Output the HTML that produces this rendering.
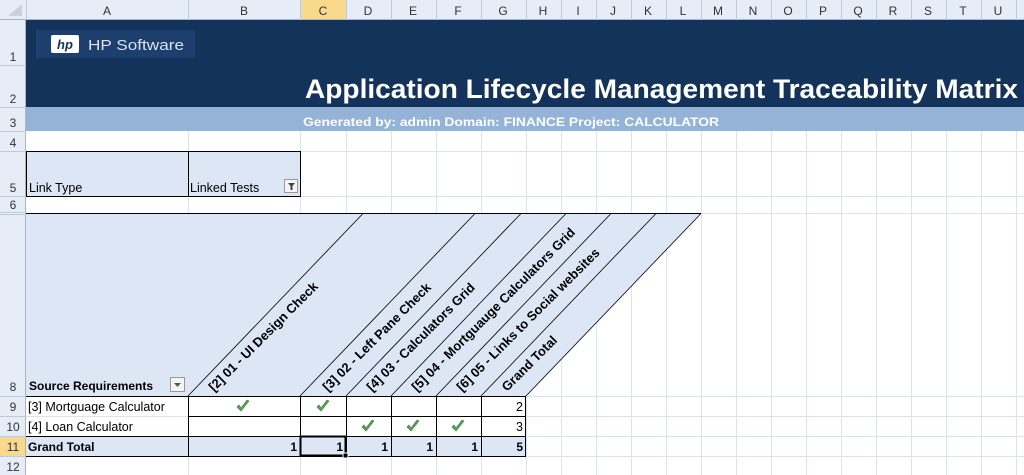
<!DOCTYPE html>
<html><head><meta charset="utf-8"><style>
html,body{margin:0;padding:0;background:#fff;overflow:hidden}
svg{display:block}
text{font-family:"Liberation Sans",sans-serif}
</style></head><body>
<svg width="1024" height="475" viewBox="0 0 1024 475" xmlns="http://www.w3.org/2000/svg">
<defs>
<g id="chk"><path d="M-6,1 L-2,5 L6,-5 L4,-6 L-2,2 L-4,-1 Z" fill="#5aa05a" stroke="#3d7d3d" stroke-width="0.6"/></g>
</defs>
<rect width="1024" height="475" fill="#fff"/>
<g stroke="#dde3ec" stroke-width="1">
<line x1="188.5" y1="20" x2="188.5" y2="475"/><line x1="300.5" y1="20" x2="300.5" y2="475"/>
<line x1="346.5" y1="20" x2="346.5" y2="475"/><line x1="391.5" y1="20" x2="391.5" y2="475"/>
<line x1="436.5" y1="20" x2="436.5" y2="475"/><line x1="481.5" y1="20" x2="481.5" y2="475"/>
<line x1="526.5" y1="20" x2="526.5" y2="475"/><line x1="561.5" y1="20" x2="561.5" y2="475"/>
<line x1="596.5" y1="20" x2="596.5" y2="475"/><line x1="631.5" y1="20" x2="631.5" y2="475"/>
<line x1="666.5" y1="20" x2="666.5" y2="475"/><line x1="701.5" y1="20" x2="701.5" y2="475"/>
<line x1="736.5" y1="20" x2="736.5" y2="475"/><line x1="771.5" y1="20" x2="771.5" y2="475"/>
<line x1="806.5" y1="20" x2="806.5" y2="475"/><line x1="841.5" y1="20" x2="841.5" y2="475"/>
<line x1="876.5" y1="20" x2="876.5" y2="475"/><line x1="911.5" y1="20" x2="911.5" y2="475"/>
<line x1="946.5" y1="20" x2="946.5" y2="475"/><line x1="981.5" y1="20" x2="981.5" y2="475"/>
<line x1="1016.5" y1="20" x2="1016.5" y2="475"/>
<line x1="26" y1="151.5" x2="1024" y2="151.5"/><line x1="26" y1="196.5" x2="1024" y2="196.5"/>
<line x1="26" y1="213.5" x2="1024" y2="213.5"/><line x1="26" y1="396.5" x2="1024" y2="396.5"/>
<line x1="26" y1="416.5" x2="1024" y2="416.5"/><line x1="26" y1="436.5" x2="1024" y2="436.5"/>
<line x1="26" y1="456.5" x2="1024" y2="456.5"/>
</g>
<rect x="26" y="20" width="998" height="87" fill="#13335a"/>
<rect x="26" y="107" width="998" height="24" fill="#94b3d7"/>
<rect x="36" y="30" width="159" height="28" fill="#1c3f6d"/>
<rect x="51" y="35" width="28" height="18" rx="2" fill="#fff"/>
<text x="65" y="49" font-size="13" font-weight="bold" font-style="italic" fill="#13335a" text-anchor="middle">hp</text>
<text x="88" y="50" font-size="15" fill="#dbe3ee" textLength="96" lengthAdjust="spacingAndGlyphs">HP Software</text>
<text x="305" y="98" font-size="27" font-weight="bold" fill="#fff" textLength="713" lengthAdjust="spacingAndGlyphs">Application Lifecycle Management Traceability Matrix</text>
<text x="303" y="126" font-size="12" font-weight="bold" fill="#fff" textLength="416" lengthAdjust="spacingAndGlyphs">Generated by: admin Domain: FINANCE Project: CALCULATOR</text>
<rect x="26.5" y="151.5" width="274" height="45" fill="#dce6f5" stroke="#000"/>
<line x1="188.5" y1="151.5" x2="188.5" y2="196.5" stroke="#000"/>
<text x="29" y="192" font-size="12.5" fill="#000">Link Type</text>
<text x="190" y="192" font-size="12.5" fill="#000">Linked Tests</text>
<rect x="284.5" y="179.5" width="13" height="13" fill="#f4f4f4" stroke="#999"/>
<path d="M288,183 h7 l-2.5,3 v4 h-2 v-4 z" fill="#444"/>
<polygon points="26,213.5 701,213.5 526,396 26,396" fill="#dce6f5"/>
<line x1="26" y1="213.5" x2="701" y2="213.5" stroke="#000"/>
<g stroke="#000" stroke-width="0.8">
<line x1="188" y1="396" x2="363" y2="213.5"/><line x1="300" y1="396" x2="475" y2="213.5"/>
<line x1="346" y1="396" x2="521" y2="213.5"/><line x1="391" y1="396" x2="566" y2="213.5"/>
<line x1="436" y1="396" x2="611" y2="213.5"/><line x1="481" y1="396" x2="656" y2="213.5"/>
<line x1="526" y1="396" x2="701" y2="213.5"/>
</g>
<g font-size="13" font-weight="bold" fill="#000">
<text transform="translate(214,392) rotate(-45)">[2] 01 - UI Design Check</text>
<text transform="translate(328,392) rotate(-45)">[3] 02 - Left Pane Check</text>
<text transform="translate(372,392) rotate(-45)">[4] 03 - Calculators Grid</text>
<text transform="translate(417,392) rotate(-45)">[5] 04 - Mortguauge Calculators Grid</text>
<text transform="translate(462,392) rotate(-45)">[6] 05 - Links to Social websites</text>
<text transform="translate(507,392) rotate(-45)">Grand Total</text>
</g>
<text x="29" y="390" font-size="12" font-weight="bold" fill="#000">Source Requirements</text>
<rect x="170.5" y="377.5" width="14" height="14" fill="#f4f4f4" stroke="#999"/>
<path d="M174,383 h7 l-3.5,4 z" fill="#555"/>
<rect x="26" y="436" width="500" height="20" fill="#dce6f5"/>
<g stroke="#000" stroke-width="1">
<line x1="26" y1="396.5" x2="526" y2="396.5"/><line x1="188" y1="416.5" x2="526" y2="416.5"/>
<line x1="26" y1="436.5" x2="526" y2="436.5"/><line x1="26" y1="456.5" x2="526" y2="456.5"/>
<line x1="188.5" y1="396" x2="188.5" y2="456"/><line x1="300.5" y1="396" x2="300.5" y2="456"/>
<line x1="346.5" y1="396" x2="346.5" y2="456"/><line x1="391.5" y1="396" x2="391.5" y2="456"/>
<line x1="436.5" y1="396" x2="436.5" y2="456"/><line x1="481.5" y1="396" x2="481.5" y2="456"/>
<line x1="525.5" y1="396" x2="525.5" y2="456"/>
</g>
<g font-size="12.5" fill="#000">
<text x="28" y="411">[3] Mortguage Calculator</text>
<text x="28" y="431">[4] Loan Calculator</text>
<text x="523" y="411" text-anchor="end">2</text>
<text x="523" y="431" text-anchor="end">3</text>
</g>
<g font-size="12" font-weight="bold" fill="#000">
<text x="28" y="451">Grand Total</text>
<text x="297" y="451" text-anchor="end">1</text>
<text x="343" y="451" text-anchor="end">1</text>
<text x="388" y="451" text-anchor="end">1</text>
<text x="433" y="451" text-anchor="end">1</text>
<text x="478" y="451" text-anchor="end">1</text>
<text x="523" y="451" text-anchor="end">5</text>
</g>
<use href="#chk" x="243" y="406"/><use href="#chk" x="323" y="406"/>
<use href="#chk" x="368" y="426"/><use href="#chk" x="413" y="426"/><use href="#chk" x="458" y="426"/>
<rect x="300.5" y="436.5" width="45" height="19" fill="none" stroke="#000" stroke-width="2"/>
<rect x="343" y="453" width="5" height="5" fill="#000" stroke="#fff" stroke-width="1"/>
<rect x="0" y="0" width="1024" height="20" fill="#e6edf6"/>
<rect x="300" y="0" width="46" height="20" fill="#f9d98c"/>
<line x1="0" y1="19.5" x2="1024" y2="19.5" stroke="#9eb6ce"/>
<g stroke="#c0cbd8">
<line x1="26.5" y1="0" x2="26.5" y2="20"/><line x1="188.5" y1="0" x2="188.5" y2="20"/><line x1="300.5" y1="0" x2="300.5" y2="20"/>
<line x1="346.5" y1="0" x2="346.5" y2="20"/><line x1="391.5" y1="0" x2="391.5" y2="20"/><line x1="436.5" y1="0" x2="436.5" y2="20"/>
<line x1="481.5" y1="0" x2="481.5" y2="20"/><line x1="526.5" y1="0" x2="526.5" y2="20"/><line x1="561.5" y1="0" x2="561.5" y2="20"/>
<line x1="596.5" y1="0" x2="596.5" y2="20"/><line x1="631.5" y1="0" x2="631.5" y2="20"/><line x1="666.5" y1="0" x2="666.5" y2="20"/>
<line x1="701.5" y1="0" x2="701.5" y2="20"/><line x1="736.5" y1="0" x2="736.5" y2="20"/><line x1="771.5" y1="0" x2="771.5" y2="20"/>
<line x1="806.5" y1="0" x2="806.5" y2="20"/><line x1="841.5" y1="0" x2="841.5" y2="20"/><line x1="876.5" y1="0" x2="876.5" y2="20"/>
<line x1="911.5" y1="0" x2="911.5" y2="20"/><line x1="946.5" y1="0" x2="946.5" y2="20"/><line x1="981.5" y1="0" x2="981.5" y2="20"/>
<line x1="1016.5" y1="0" x2="1016.5" y2="20"/>
</g>
<path d="M8,16 L22,16 L22,4 Z" fill="#c8d2de"/>
<g font-size="12" fill="#333" text-anchor="middle">
<text x="107" y="15">A</text><text x="244" y="15">B</text><text x="323" y="15">C</text><text x="368" y="15">D</text>
<text x="413" y="15">E</text><text x="458" y="15">F</text><text x="503" y="15">G</text><text x="543" y="15">H</text>
<text x="578" y="15">I</text><text x="613" y="15">J</text><text x="648" y="15">K</text><text x="683" y="15">L</text>
<text x="718" y="15">M</text><text x="753" y="15">N</text><text x="788" y="15">O</text><text x="823" y="15">P</text>
<text x="858" y="15">Q</text><text x="893" y="15">R</text><text x="928" y="15">S</text><text x="963" y="15">T</text>
<text x="998" y="15">U</text>
</g>
<rect x="0" y="20" width="26" height="455" fill="#e6edf6"/>
<rect x="0" y="436" width="26" height="20" fill="#f9d98c"/>
<line x1="25.5" y1="20" x2="25.5" y2="475" stroke="#9eb6ce"/>
<g stroke="#c0cbd8">
<line x1="0" y1="65.5" x2="26" y2="65.5"/><line x1="0" y1="107.5" x2="26" y2="107.5"/><line x1="0" y1="131.5" x2="26" y2="131.5"/>
<line x1="0" y1="151.5" x2="26" y2="151.5"/><line x1="0" y1="196.5" x2="26" y2="196.5"/><line x1="0" y1="212.5" x2="26" y2="212.5"/>
<line x1="0" y1="214.5" x2="26" y2="214.5"/>
<line x1="0" y1="396.5" x2="26" y2="396.5"/><line x1="0" y1="416.5" x2="26" y2="416.5"/><line x1="0" y1="436.5" x2="26" y2="436.5"/>
<line x1="0" y1="456.5" x2="26" y2="456.5"/>
</g>
<g font-size="12" fill="#333" text-anchor="middle">
<text x="13" y="61">1</text><text x="13" y="103">2</text><text x="13" y="127">3</text><text x="13" y="147">4</text>
<text x="13" y="192">5</text><text x="13" y="209">6</text><text x="13" y="391">8</text><text x="13" y="411">9</text>
<text x="13" y="431">10</text><text x="13" y="451">11</text><text x="13" y="471">12</text>
</g>
</svg>
</body></html>
